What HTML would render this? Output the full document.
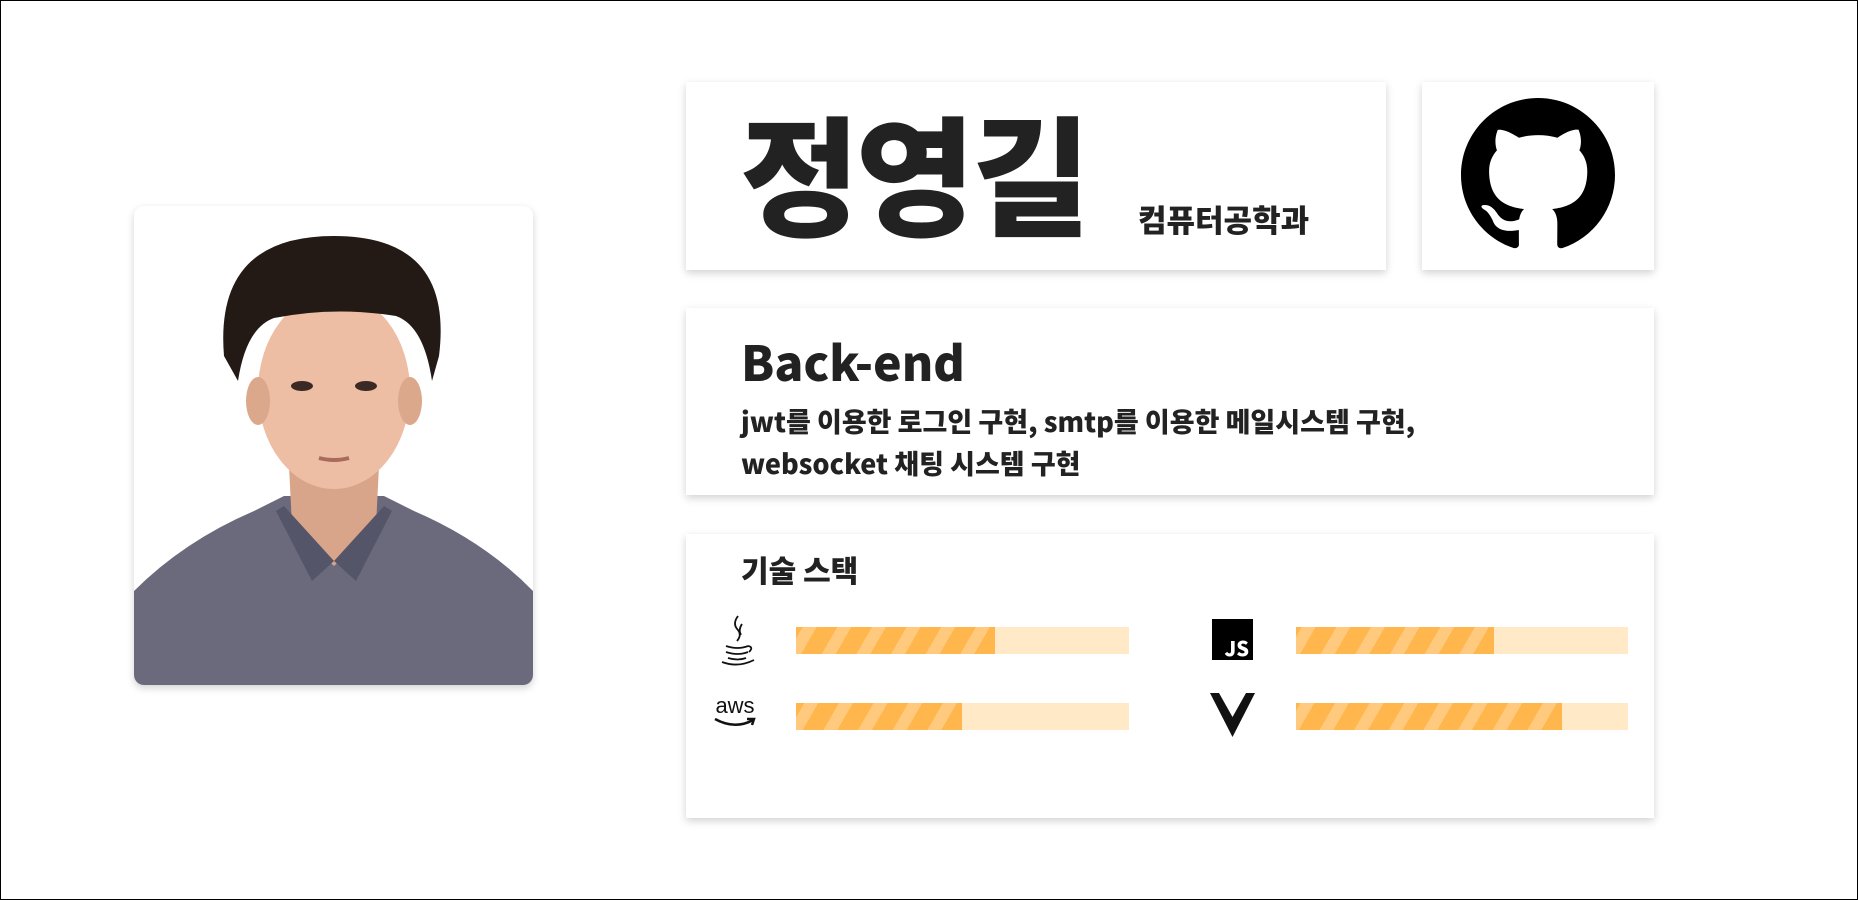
<!DOCTYPE html>
<html><head><meta charset="utf-8"><style>
html,body{margin:0;padding:0;}
body{width:1858px;height:900px;position:relative;background:#fff;overflow:hidden;font-family:"Liberation Sans","Noto Sans CJK KR",sans-serif;color:#222;}
.frame{position:absolute;left:0;top:0;width:1856px;height:898px;border:1px solid #000;}
.card{position:absolute;background:#fff;box-shadow:0 3px 8px rgba(0,0,0,0.18);}
.k{font-family:"Noto Sans CJK KR","Liberation Sans",sans-serif;font-weight:900;}
.bar{position:absolute;height:27px;background:#FFE9C7;}
.fill{position:absolute;left:0;top:0;height:100%;background:repeating-linear-gradient(-60deg,#FFB74D 0 18px,#FFCA7E 18px 30px);}
</style></head><body>
<div class="frame"></div>

<div class="card" style="left:134px;top:206px;width:399px;height:479px;border-radius:10px;overflow:hidden;">
<svg width="399" height="479" viewBox="0 0 399 479">
<rect width="399" height="479" fill="#fff"/>
<path d="M0 385 Q50 335 120 305 L150 290 L250 290 L280 305 Q350 335 399 385 L399 479 L0 479Z" fill="#6a6a7c"/>
<path d="M155 260 L158 320 L200 360 L242 320 L245 260Z" fill="#d9a58a"/>
<path d="M150 300 L200 355 L178 375 L142 305Z M250 300 L200 355 L222 375 L258 305Z" fill="#55556a"/>
<ellipse cx="200" cy="185" rx="76" ry="98" fill="#edbea3"/>
<ellipse cx="124" cy="195" rx="12" ry="24" fill="#dca88c"/>
<ellipse cx="276" cy="195" rx="12" ry="24" fill="#dca88c"/>
<path d="M90 150 Q80 30 200 30 Q320 30 305 150 L298 175 Q290 120 262 110 Q200 100 140 112 Q112 122 104 175Z" fill="#231915"/>
<ellipse cx="168" cy="180" rx="11" ry="5" fill="#3a2a25"/>
<ellipse cx="232" cy="180" rx="11" ry="5" fill="#3a2a25"/>
<path d="M185 252 Q200 256 215 252" stroke="#a86b5c" stroke-width="4" fill="none"/>
</svg></div>

<div class="card" style="left:686px;top:82px;width:700px;height:188px;">
<div class="k" style="position:absolute;left:54px;top:-2px;font-size:130px;line-height:180px;letter-spacing:-4px;color:#222;">정영길</div>
<div class="k" style="position:absolute;left:452px;top:116px;font-size:31px;line-height:42px;color:#222;">컴퓨터공학과</div>
</div>

<div class="card" style="left:1422px;top:82px;width:232px;height:188px;">
<svg style="position:absolute;left:39px;top:16px" width="154" height="154" viewBox="0 0 16 16"><path fill="#000" d="M8 0C3.580 0 0 3.58 0 8c0 3.54 2.29 6.53 5.47 7.59.4.07.55-.17.55-.38 0-.19-.01-.82-.01-1.490-2.01.37-2.53-.49-2.69-.94-.09-.23-.48-.94-.82-1.13-.28-.15-.68-.52-.01-.53.63-.01 1.08.58 1.23.82.72 1.21 1.87.87 2.33.66.07-.52.28-.87.51-1.07-1.78-.2-3.64-.89-3.64-3.95 0-.87.31-1.59.82-2.15-.08-.2-.36-1.02.08-2.12 0 0 .67-.21 2.2.82.64-.18 1.32-.27 2-.27.68 0 1.36.09 2 .27 1.53-1.04 2.2-.82 2.2-.82.44 1.1.16 1.92.08 2.12.51.56.82 1.27.82 2.15 0 3.07-1.87 3.75-3.65 3.95.29.25.54.73.54 1.48 0 1.07-.01 1.93-.01 2.2 0 .21.15.46.55.38A8.013 8.013 0 0016 8c0-4.42-3.58-8-8-8z"/></svg>
</div>

<div class="card" style="left:686px;top:308px;width:968px;height:187px;">
<div class="k" style="position:absolute;left:55px;top:20px;font-size:48px;line-height:64px;">Back-end</div>
<div class="k" style="position:absolute;left:55px;top:92px;font-size:27px;line-height:42px;">jwt를 이용한 로그인 구현, smtp를 이용한 메일시스템 구현,<br>websocket 채팅 시스템 구현</div>
</div>

<div class="card" style="left:686px;top:534px;width:968px;height:284px;">
<div class="k" style="position:absolute;left:55px;top:13px;font-size:30px;line-height:44px;">기술 스택</div>
</div>

<div class="bar" style="left:796px;top:627px;width:333px;"><div class="fill" style="width:199px"></div></div>
<div class="bar" style="left:1296px;top:627px;width:332px;"><div class="fill" style="width:198px"></div></div>
<div class="bar" style="left:796px;top:703px;width:333px;"><div class="fill" style="width:166px"></div></div>
<div class="bar" style="left:1296px;top:703px;width:332px;"><div class="fill" style="width:266px"></div></div>

<svg style="position:absolute;left:716px;top:614px" width="44" height="52" viewBox="0 0 44 52" fill="none" stroke="#111" stroke-width="1.8">
<path d="M22 2 Q16 10 22 16 Q26 21 21 27"/><path d="M26 10 Q22 16 25 21"/>
<path d="M10 32 Q22 36 32 32"/><path d="M10 38 Q22 42 32 38"/><path d="M12 44 Q22 47 30 44"/><path d="M32 32 Q38 33 33 38"/><path d="M6 48 Q22 54 38 46"/>
</svg>
<div style="position:absolute;left:1212px;top:619px;width:41px;height:41px;background:#000;"><span class="k" style="position:absolute;right:4px;bottom:0px;color:#fff;font-size:20px;line-height:24px;">JS</span></div>
<div style="position:absolute;left:711px;top:694px;width:48px;height:40px;">
<div style="font-family:'Liberation Sans',sans-serif;font-size:22px;line-height:24px;color:#111;text-align:center;">aws</div>
<svg style="position:absolute;left:2px;top:22px" width="44" height="14" viewBox="0 0 44 14" fill="none" stroke="#111" stroke-width="2.5"><path d="M2 3 Q22 14 40 4"/><path d="M34 3 L41 3 L39 9"/></svg>
</div>
<svg style="position:absolute;left:1210px;top:693px" width="45" height="44" viewBox="0 0 45 44"><path d="M0 0 H9 L22.5 24 L36 0 H45 L22.5 44Z" fill="#111"/><path d="M11 0 H17 L22.5 10 L28 0 H34 L22.5 20Z" fill="#fff"/></svg>
</body></html>
